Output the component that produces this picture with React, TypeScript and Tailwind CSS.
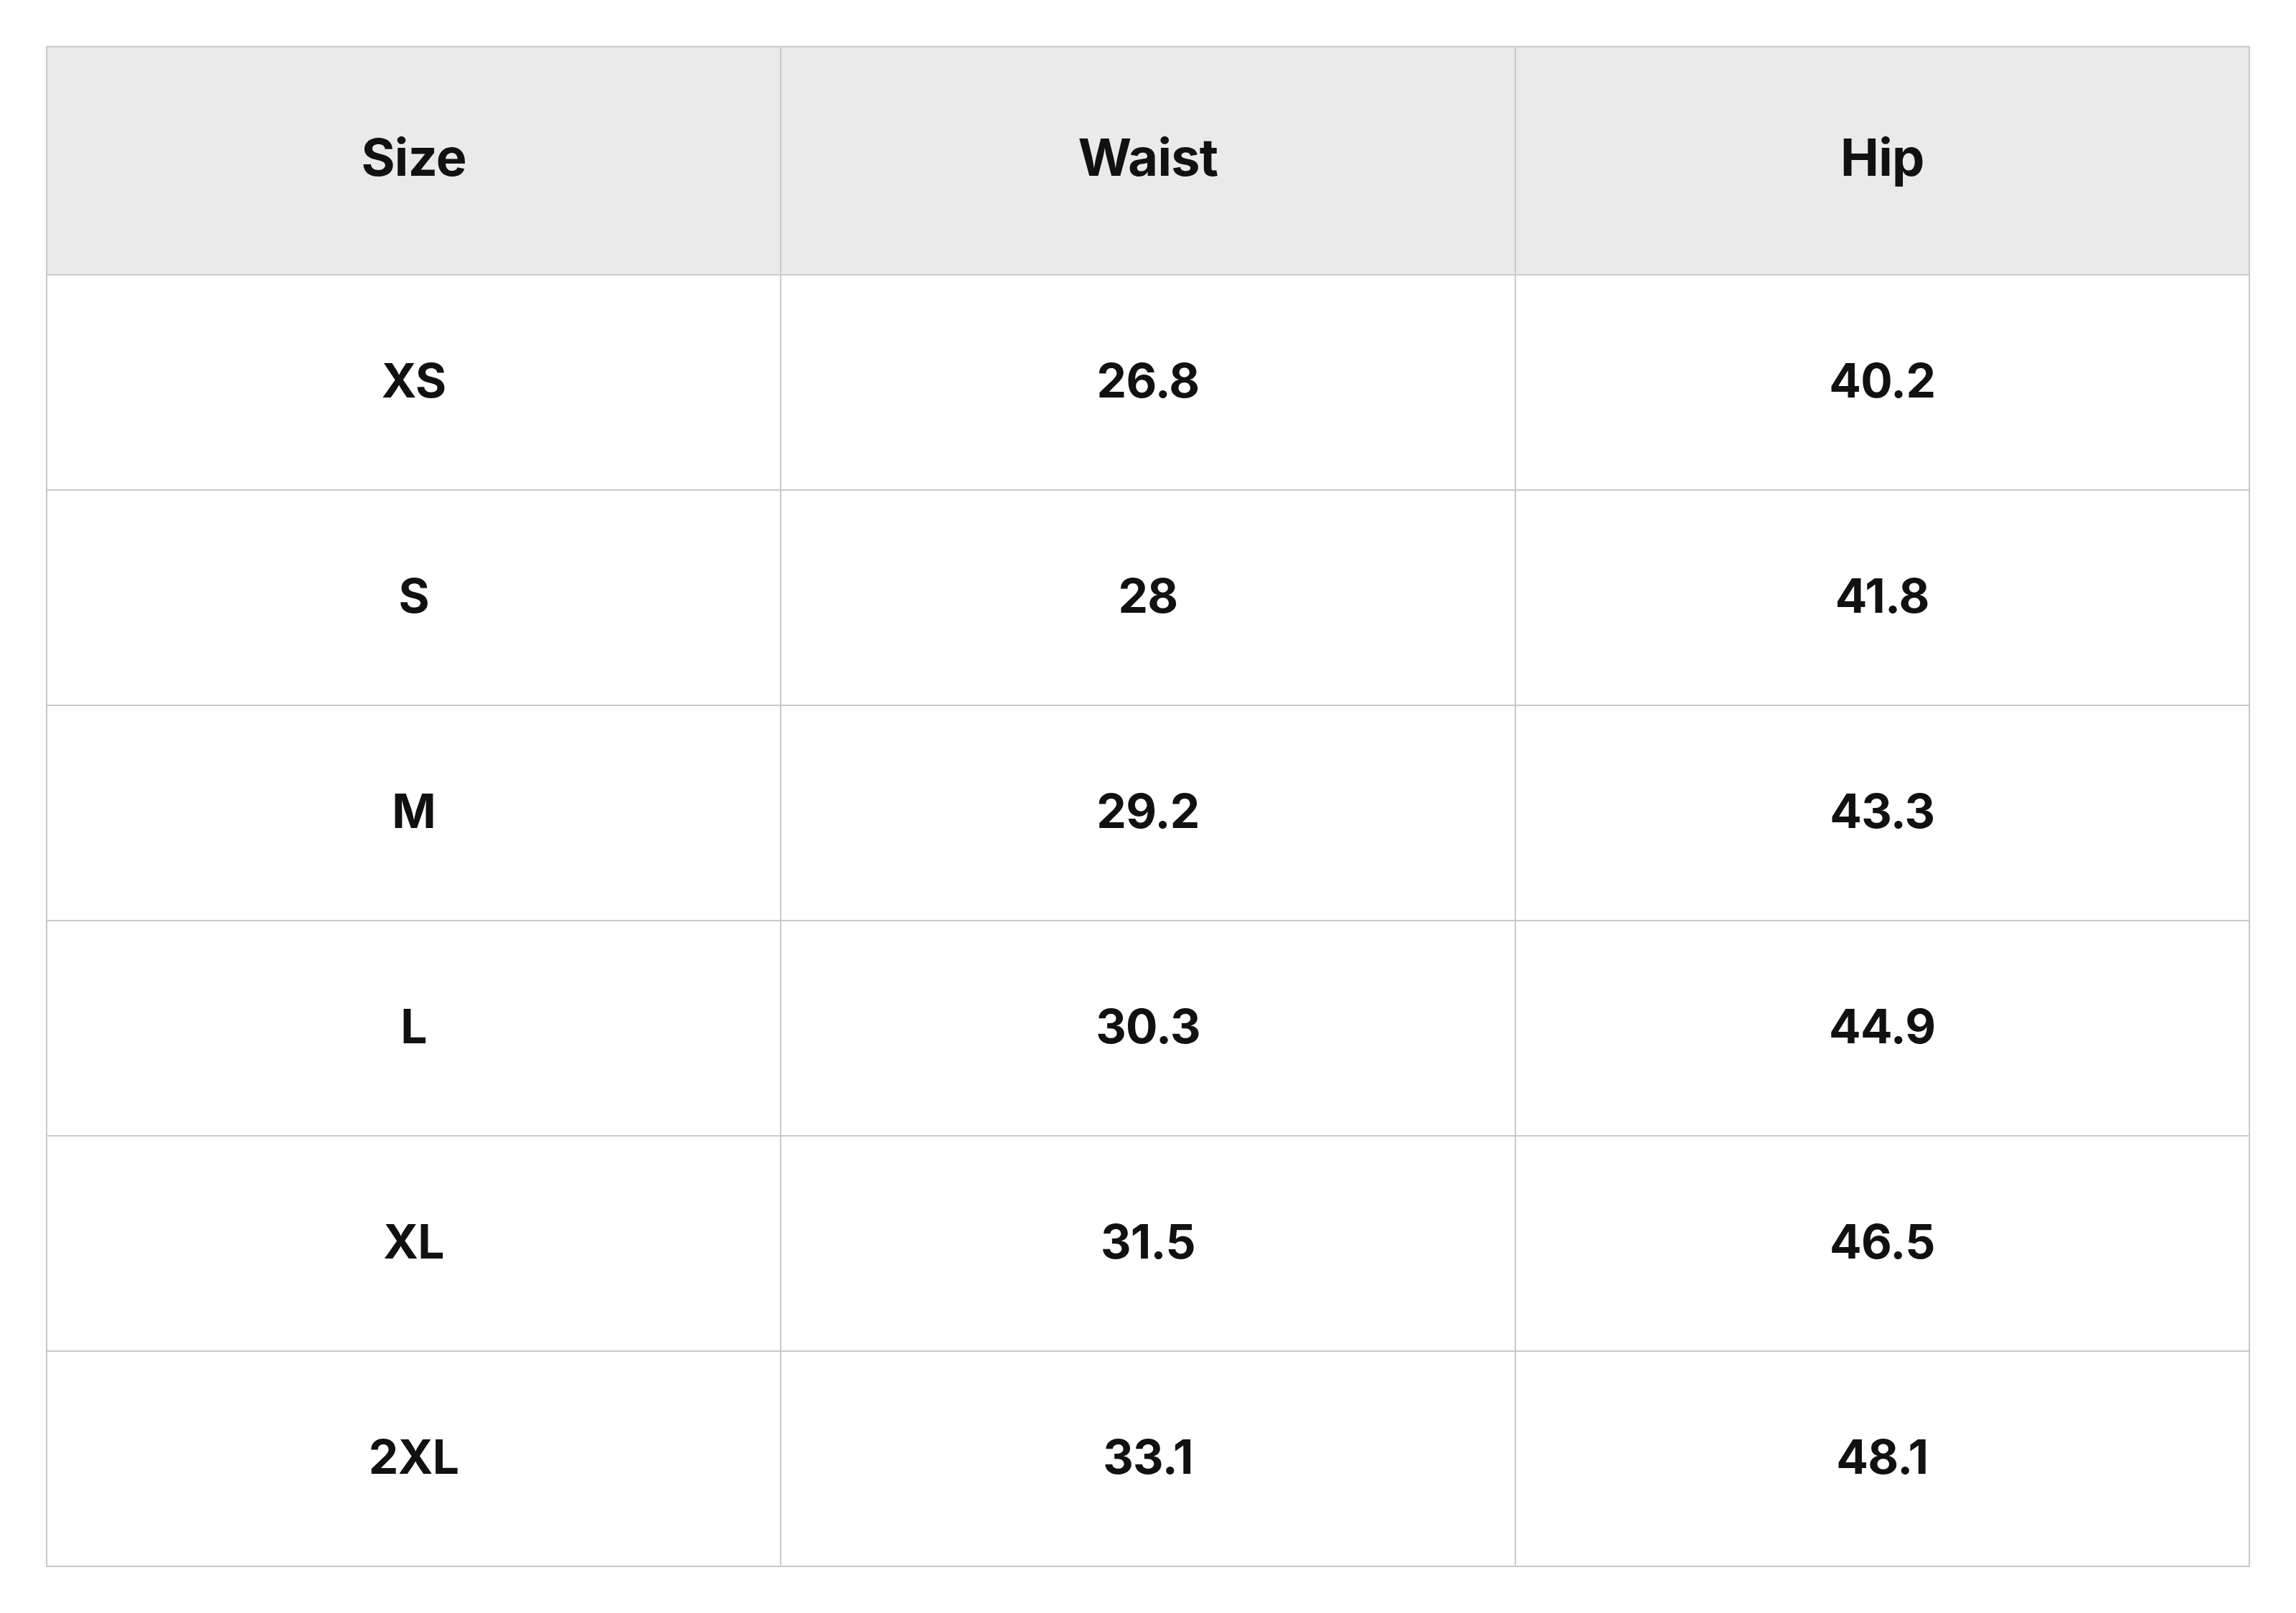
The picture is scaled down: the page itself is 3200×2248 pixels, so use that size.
import React from 'react';

const rows = [
  { size: 'XS', waist: '26.8', hip: '40.2' },
  { size: 'S', waist: '28', hip: '41.8' },
  { size: 'M', waist: '29.2', hip: '43.3' },
  { size: 'L', waist: '30.3', hip: '44.9' },
  { size: 'XL', waist: '31.5', hip: '46.5' },
  { size: '2XL', waist: '33.1', hip: '48.1' },
];

export default function App() {
  return (
    <div className="min-h-screen bg-white p-16 font-['Inter',sans-serif] text-[#111111]">
      <table className="w-full table-fixed border-collapse border-2 border-[#c9c9c9]">
        <thead>
          <tr className="bg-[#eaeaea]">
            {['Size', 'Waist', 'Hip'].map((h) => (
              <th
                key={h}
                className="h-[318px] border-2 border-[#c9c9c9] pb-[10px] text-center align-middle text-[72px] font-bold tracking-[-0.01em]"
              >
                {h}
              </th>
            ))}
          </tr>
        </thead>
        <tbody>
          {rows.map((r) => (
            <tr key={r.size}>
              {[r.size, r.waist, r.hip].map((v, i) => (
                <td
                  key={i}
                  className="h-[300px] border-2 border-[#c9c9c9] pb-[6px] text-center align-middle text-[66px] font-bold tracking-[-0.01em]"
                >
                  {v}
                </td>
              ))}
            </tr>
          ))}
        </tbody>
      </table>
    </div>
  );
}
